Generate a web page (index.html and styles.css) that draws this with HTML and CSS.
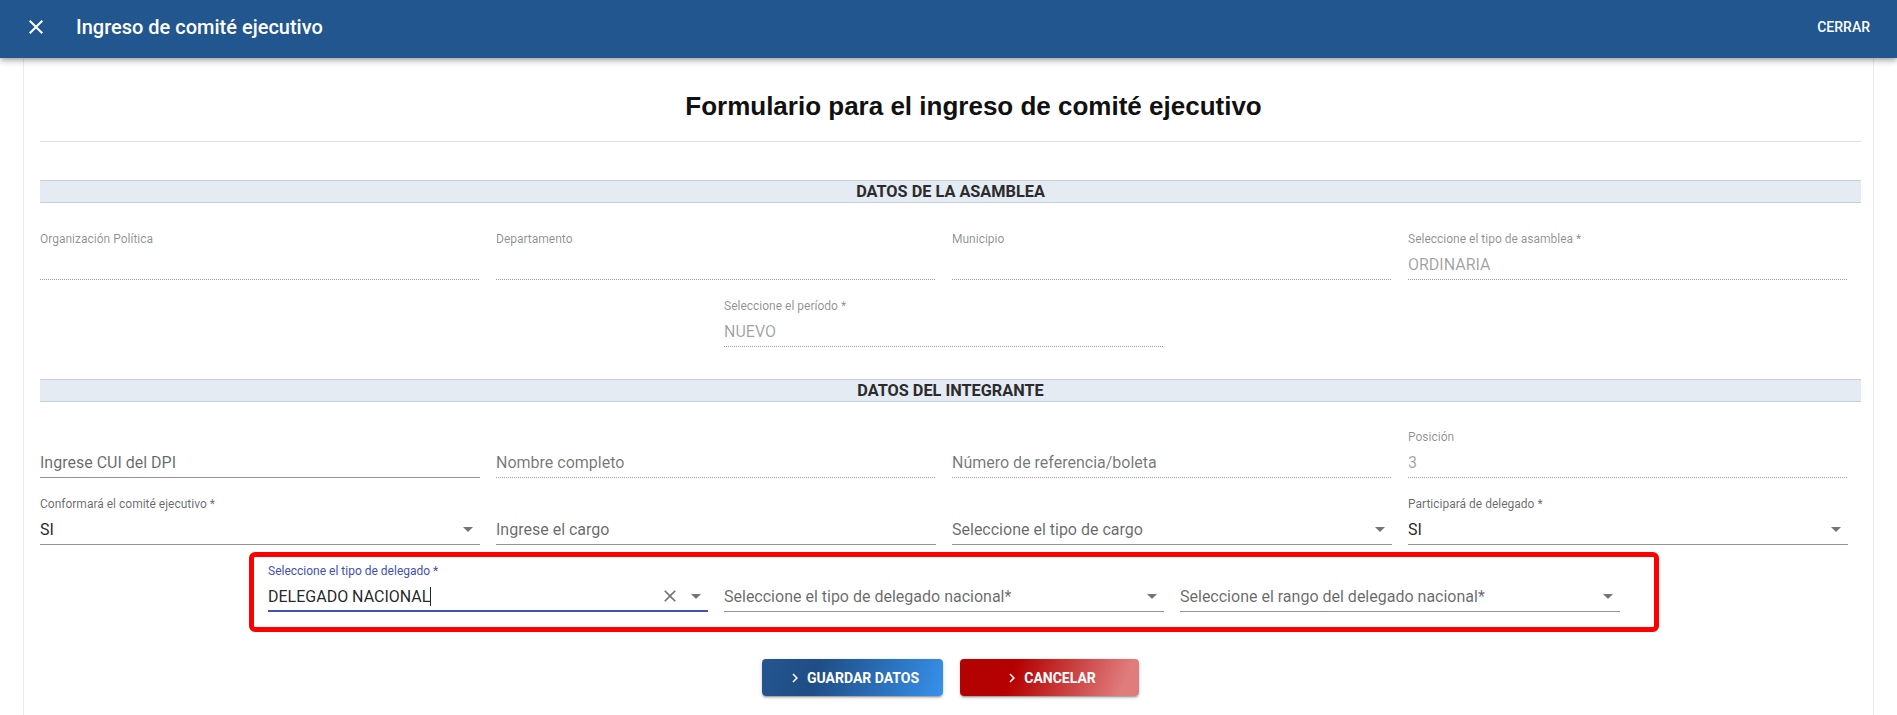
FILE: index.html
```html
<!DOCTYPE html>
<html lang="es">
<head>
<meta charset="utf-8">
<title>Ingreso de comité ejecutivo</title>
<link rel="stylesheet" href="styles.css">
</head>
<body>
<header class="appbar">
  <span class="appbar-icon">
    <svg viewBox="0 0 24 24" width="24" height="24"><path fill="#fff" d="M19,6.41L17.59,5L12,10.59L6.41,5L5,6.41L10.59,12L5,17.59L6.41,19L12,13.41L17.59,19L19,17.59L13.41,12L19,6.41Z"/></svg>
  </span>
  <div class="appbar-title">Ingreso de comité ejecutivo</div>
  <div class="spacer"></div>
  <span class="appbar-action">CERRAR</span>
</header>

<main class="card">
  <h1 class="form-title">Formulario para el ingreso de comité ejecutivo</h1>
  <div class="divider"></div>

  <div class="section-bar">DATOS DE LA ASAMBLEA</div>
  <div class="row first top">
    <div class="col"><div class="field"><div class="label dim">Organización Política</div><div class="input disabled"></div></div></div>
    <div class="col"><div class="field"><div class="label dim">Departamento</div><div class="input disabled"></div></div></div>
    <div class="col"><div class="field"><div class="label dim">Municipio</div><div class="input disabled"></div></div></div>
    <div class="col"><div class="field"><div class="label dim">Seleccione el tipo de asamblea *</div><div class="input disabled"><span class="value faded">ORDINARIA</span></div></div></div>
  </div>
  <div class="row">
    <div class="col"><div class="field"><div class="label dim">Seleccione el período *</div><div class="input disabled"><span class="value faded">NUEVO</span></div></div></div>
  </div>

  <div class="section-bar second">DATOS DEL INTEGRANTE</div>
  <div class="row first">
    <div class="col"><div class="field"><div class="label"></div><div class="input"><span class="value placeholder">Ingrese CUI del DPI</span></div></div></div>
    <div class="col"><div class="field"><div class="label"></div><div class="input disabled"><span class="value placeholder-dis">Nombre completo</span></div></div></div>
    <div class="col"><div class="field"><div class="label"></div><div class="input disabled"><span class="value placeholder-dis">Número de referencia/boleta</span></div></div></div>
    <div class="col"><div class="field"><div class="label dim">Posición</div><div class="input disabled"><span class="value faded">3</span></div></div></div>
  </div>
  <div class="row">
    <div class="col"><div class="field"><div class="label">Conformará el comité ejecutivo *</div><div class="input"><span class="value">SI</span><span class="spacer"></span><span class="ico"><svg viewBox="0 0 24 24" width="24" height="24"><path d="M7,10L12,15L17,10H7Z"/></svg></span></div></div></div>
    <div class="col"><div class="field"><div class="label"></div><div class="input"><span class="value placeholder">Ingrese el cargo</span></div></div></div>
    <div class="col"><div class="field"><div class="label"></div><div class="input"><span class="value placeholder">Seleccione el tipo de cargo</span><span class="spacer"></span><span class="ico"><svg viewBox="0 0 24 24" width="24" height="24"><path d="M7,10L12,15L17,10H7Z"/></svg></span></div></div></div>
    <div class="col"><div class="field"><div class="label">Participará de delegado *</div><div class="input"><span class="value">SI</span><span class="spacer"></span><span class="ico"><svg viewBox="0 0 24 24" width="24" height="24"><path d="M7,10L12,15L17,10H7Z"/></svg></span></div></div></div>
  </div>
  <div class="row highlight">
    <div class="col"><div class="field"><div class="label focus">Seleccione el tipo de delegado *</div><div class="input focused"><span class="value">DELEGADO NACIONAL</span><span class="caret"></span><span class="spacer"></span><span class="ico"><svg viewBox="0 0 24 24" width="20" height="20"><path d="M19,6.41L17.59,5L12,10.59L6.41,5L5,6.41L10.59,12L5,17.59L6.41,19L12,13.41L17.59,19L19,17.59L13.41,12L19,6.41Z"/></svg></span><span class="ico gap"><svg viewBox="0 0 24 24" width="24" height="24"><path d="M7,10L12,15L17,10H7Z"/></svg></span></div></div></div>
    <div class="col"><div class="field"><div class="label"></div><div class="input"><span class="value placeholder">Seleccione el tipo de delegado nacional*</span><span class="spacer"></span><span class="ico"><svg viewBox="0 0 24 24" width="24" height="24"><path d="M7,10L12,15L17,10H7Z"/></svg></span></div></div></div>
    <div class="col"><div class="field"><div class="label"></div><div class="input"><span class="value placeholder">Seleccione el rango del delegado nacional*</span><span class="spacer"></span><span class="ico"><svg viewBox="0 0 24 24" width="24" height="24"><path d="M7,10L12,15L17,10H7Z"/></svg></span></div></div></div>
    <div class="mark"></div>
  </div>

  <div class="actions">
    <button class="btn btn-save"><svg viewBox="0 0 24 24" width="18" height="18"><path fill="#fff" d="M8.59,16.58L13.17,12L8.59,7.41L10,6L16,12L10,18L8.59,16.58Z"/></svg><span>GUARDAR DATOS</span></button>
    <button class="btn btn-cancel"><svg viewBox="0 0 24 24" width="18" height="18"><path fill="#fff" d="M8.59,16.58L13.17,12L8.59,7.41L10,6L16,12L10,18L8.59,16.58Z"/></svg><span>CANCELAR</span></button>
  </div>
</main>
</body>
</html>
```

FILE: styles.css
```css
* { box-sizing: border-box; }
html, body { margin: 0; padding: 0; background: #fff; }
body {
  font-family: Roboto, "Noto Sans", sans-serif;
  color: rgba(0,0,0,.87);
  height: 715px;
  overflow: hidden;
}

.appbar {
  position: relative;
  z-index: 2;
  height: 58px;
  background: #21568f;
  display: flex;
  align-items: center;
  padding: 0 27px 4px 24px;
  box-shadow: 0 2px 4px -1px rgba(0,0,0,.2), 0 4px 5px 0 rgba(0,0,0,.14), 0 1px 10px 0 rgba(0,0,0,.12);
  color: #fff;
}
.appbar-icon { display: flex; width: 24px; height: 24px; }
.appbar-title {
  margin-left: 28px;
  font-size: 20px;
  font-weight: 500;
  letter-spacing: 0;
}
.appbar-action {
  font-size: 14px;
  font-weight: 500;
}
.spacer { flex: 1 1 auto; }

.card {
  margin: 0 23px;
  min-height: 700px;
  border-left: 1px solid #ececec;
  border-right: 1px solid #ececec;
  padding: 32px 12px 0 16px;
  background: #fff;
}
.form-title {
  margin: 0;
  padding-left: 46px;
  text-align: center;
  font-family: "Liberation Sans", Arial, sans-serif;
  font-weight: 700;
  font-size: 26px;
  line-height: 32px;
  color: #111;
}
.divider {
  margin-top: 19px;
  height: 1px;
  background: #e0e0e0;
}
.section-bar {
  margin-top: 38px;
  height: 23px;
  line-height: 21px;
  background: #e4ebf2;
  border-top: 1px solid #c6ced7;
  border-bottom: 1px solid #c6ced7;
  text-align: center;
  font-size: 16.3px;
  font-weight: 700;
  color: #2b2b2b;
}
.section-bar.second { margin-top: 13px; }

.row {
  position: relative;
  display: flex;
  justify-content: center;
  width: 1824px;
  margin-left: -8px;
}
.row.first { margin-top: 28px; }
.row.first.top { margin-top: 29px; }
.col {
  width: 456px;
  padding: 0 8px;
}
.field { padding-bottom: 19px; }
.label {
  height: 14px;
  line-height: 14px;
  font-size: 12px;
  color: rgba(0,0,0,.6);
  white-space: nowrap;
}
.label.dim { color: rgba(0,0,0,.45); }
.label.focus { color: #3f51b5; }
.input {
  margin-top: 4px;
  height: 30px;
  display: flex;
  align-items: center;
  border-bottom: 1px solid rgba(0,0,0,.42);
  font-size: 16px;
  padding-bottom: 1px;
}
.input.disabled {
  border-bottom: 1px solid transparent;
  border-image: repeating-linear-gradient(90deg, rgba(0,0,0,.38) 0, rgba(0,0,0,.38) 1px, transparent 1px, transparent 2px) 0 0 1 0 repeat;
}
.input.focused {
  border-bottom: 2px solid #3f51b5;
  padding-bottom: 0;
}
.value { white-space: nowrap; color: rgba(0,0,0,.87); }
.value.placeholder { color: rgba(0,0,0,.6); }
.value.placeholder-dis { color: rgba(0,0,0,.55); }
.value.faded { color: rgba(0,0,0,.38); }
.caret {
  display: inline-block;
  width: 1px;
  height: 19px;
  background: #222;
}
.ico {
  display: flex;
  width: 24px;
  height: 24px;
  align-items: center;
  justify-content: center;
  fill: rgba(0,0,0,.54);
}
.ico.gap { margin-left: 2px; }

.mark {
  position: absolute;
  left: 217px;
  top: -12px;
  width: 1410px;
  height: 80px;
  border: 5px solid #ff0000;
  border-radius: 6px;
  pointer-events: none;
}

.actions {
  margin-top: 28px;
  display: flex;
  justify-content: center;
  gap: 17px;
}
.btn {
  display: inline-flex;
  align-items: center;
  justify-content: center;
  gap: 3px;
  height: 37px;
  border: 0;
  border-radius: 4px;
  color: #fff;
  font-family: Roboto, sans-serif;
  font-size: 14px;
  font-weight: 700;
  padding: 0;
  box-shadow: 0 3px 1px -2px rgba(0,0,0,.2), 0 2px 2px 0 rgba(0,0,0,.14), 0 1px 5px 0 rgba(0,0,0,.12);
}
.btn-save {
  width: 181px;
  background: linear-gradient(110deg, #25568f 0%, #1f4d86 30%, #3791ec 100%);
}
.btn-cancel {
  width: 179px;
  background: linear-gradient(110deg, #b30303 0%, #b50000 30%, #e07c7c 90%, #df7b7b 100%);
}
```
